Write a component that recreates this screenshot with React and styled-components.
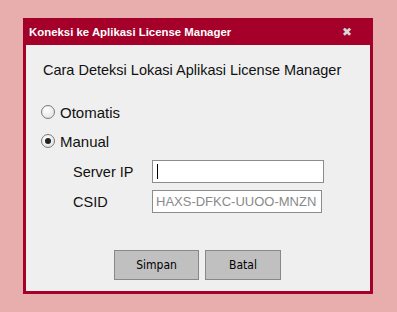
import React, { useState } from "react";
import styled, { createGlobalStyle } from "styled-components";

const GlobalStyle = createGlobalStyle`
  html, body {
    margin: 0;
    padding: 0;
    background: #e8adad;
  }
  body {
    font-family: "Liberation Sans", Arial, sans-serif;
  }
`;

const Page = styled.div`
  width: 397px;
  height: 312px;
  padding: 18px 0 0 23px;
  box-sizing: border-box;
`;

const Dialog = styled.div`
  width: 350px;
  height: 276px;
  box-sizing: border-box;
  background: #a5002a;
  padding: 0 3px 3px 3px;
  display: flex;
  flex-direction: column;
`;

const TitleBar = styled.div`
  height: 27px;
  display: flex;
  align-items: center;
  justify-content: space-between;
  padding: 0 18px 0 3px;
  color: #fff;
  font-family: "Liberation Sans", Arial, sans-serif;
  font-weight: bold;
  font-size: 11.4px;
`;

const Close = styled.span`
  color: #d8d8d8;
  font-size: 12px;
  font-weight: bold;
  font-family: "DejaVu Sans", sans-serif;
`;

const Body = styled.div`
  flex: 1;
  background: #efefef;
  padding: 17px 0 0 17px;
  color: #111;
`;

const Heading = styled.div`
  font-size: 14.5px;
  margin-bottom: 24px;
`;

const RadioRow = styled.label`
  display: flex;
  align-items: center;
  gap: 5px;
  font-size: 15px;
  height: 20px;
  margin-bottom: ${(p) => p.$mb || 9}px;
  margin-left: -2px;
`;

const Circle = styled.span`
  width: 12px;
  height: 12px;
  border-radius: 50%;
  border: 1px solid #7a7a7a;
  background: radial-gradient(circle at 40% 35%, #ffffff, #dcdcdc);
  display: flex;
  align-items: center;
  justify-content: center;
  &::after {
    content: "";
    width: 6px;
    height: 6px;
    border-radius: 50%;
    background: #222;
    display: ${(p) => (p.$checked ? "block" : "none")};
  }
`;

const FieldGrid = styled.div`
  display: grid;
  grid-template-columns: 79px auto;
  row-gap: 7px;
  margin-left: 30px;
  align-items: center;
`;

const FieldLabel = styled.div`
  font-size: 14.5px;
`;

const Input = styled.div`
  width: ${(p) => p.$w}px;
  height: 23px;
  box-sizing: border-box;
  border: 1px solid #8c8c8c;
  background: #fff;
  display: flex;
  align-items: center;
  padding-left: 3px;
  font-size: 13px;
  color: #8a8a8a;
`;

const Caret = styled.span`
  width: 1px;
  height: 15px;
  background: #000;
  margin-left: 1px;
`;

const Buttons = styled.div`
  display: flex;
  gap: 6px;
  margin: 37px 0 0 71px;
`;

const Button = styled.button`
  width: ${(p) => p.$w}px;
  height: 30px;
  background: #c0c0c0;
  border: 1px solid #888;
  font-family: "DejaVu Sans Condensed", "DejaVu Sans", sans-serif;
  font-size: 12px;
  color: #000;
  padding: 0;
`;

export default function App() {
  const [mode, setMode] = useState("manual");
  return (
    <>
      <GlobalStyle />
      <Page>
        <Dialog>
          <TitleBar>
            <span>Koneksi ke Aplikasi License Manager</span>
            <Close>✖</Close>
          </TitleBar>
          <Body>
            <Heading>Cara Deteksi Lokasi Aplikasi License Manager</Heading>
            <RadioRow onClick={() => setMode("auto")}>
              <Circle $checked={mode === "auto"} />
              Otomatis
            </RadioRow>
            <RadioRow $mb={9} onClick={() => setMode("manual")}>
              <Circle $checked={mode === "manual"} />
              Manual
            </RadioRow>
            <FieldGrid>
              <FieldLabel>Server IP</FieldLabel>
              <Input $w={172}>
                <Caret />
              </Input>
              <FieldLabel>CSID</FieldLabel>
              <Input $w={170}>HAXS-DFKC-UUOO-MNZN</Input>
            </FieldGrid>
            <Buttons>
              <Button $w={85}>Simpan</Button>
              <Button $w={76}>Batal</Button>
            </Buttons>
          </Body>
        </Dialog>
      </Page>
    </>
  );
}
